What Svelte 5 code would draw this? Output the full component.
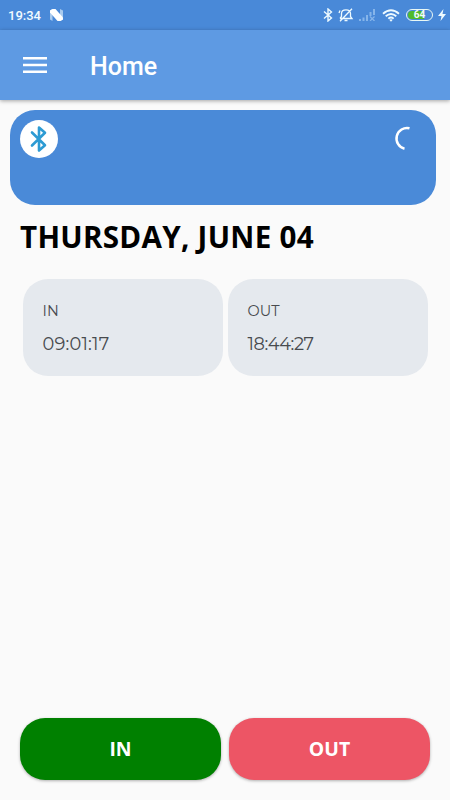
<script>
    let clock = '19:34';
    let battery = 64;
    let title = 'Home';
    let today = 'THURSDAY, JUNE 04';
    let records = [
        { label: 'IN', time: '09:01:17' },
        { label: 'OUT', time: '18:44:27' }
    ];

    function checkIn() {
        records[0].time = new Date().toTimeString().slice(0, 8);
    }

    function checkOut() {
        records[1].time = new Date().toTimeString().slice(0, 8);
    }
</script>

<style>
    :global(body) {
        margin: 0;
        background: #fafafa;
    }

    .screen {
        display: flex;
        flex-direction: column;
        height: 800px;
        box-sizing: border-box;
        background: #fafafa;
        font-family: Roboto, sans-serif;
    }

    svg {
        display: block;
        flex: none;
    }

    .status-bar {
        display: flex;
        align-items: center;
        height: 30px;
        padding: 0 4px 0 8px;
        background: #4989d8;
        color: #f2fbff;
    }

    .clock {
        width: 41px;
        padding-top: 1px;
        font-size: 13px;
        font-weight: 500;
        line-height: 29px;
    }

    .status-icons {
        display: flex;
        align-items: center;
        margin-left: auto;
    }

    .bell {
        margin-left: 5px;
    }

    .signal {
        margin-left: 4px;
    }

    .wifi {
        margin-left: 6px;
    }

    .bolt {
        margin-left: 5px;
    }

    .battery {
        display: flex;
        align-items: center;
        justify-content: center;
        box-sizing: border-box;
        width: 27px;
        height: 12px;
        margin-left: 6px;
        border: 1px solid #e9f8f5;
        border-radius: 6px;
        background: linear-gradient(90deg, #50ba2c 68%, #4989d8 68%) content-box;
        padding: 1px;
        font-size: 10px;
        font-weight: 700;
        line-height: 10px;
    }

    .toolbar {
        display: flex;
        align-items: center;
        height: 70px;
        padding-left: 23px;
        background: #5e9ae3;
        box-shadow: 0 1px 4px rgba(0, 0, 0, 0.35);
    }

    .menu {
        padding: 0;
        border: none;
        background: none;
        margin-top: -1px;
    }

    h1 {
        margin: 4px 0 0 43px;
        color: #fff;
        font-size: 25px;
        font-weight: 500;
        line-height: 32px;
    }

    .device {
        display: flex;
        justify-content: space-between;
        align-items: flex-start;
        box-sizing: border-box;
        height: 95.4px;
        margin: 10px 14px 0 10px;
        padding: 10px;
        border-radius: 25px;
        background: #4a8ad8;
    }

    .badge {
        display: flex;
        align-items: center;
        justify-content: center;
        width: 38px;
        height: 38px;
        border-radius: 50%;
        background: #fff;
    }

    h2 {
        margin: 10.6px 0 0 20px;
        color: #000;
        font-family: "Open Sans", sans-serif;
        font-size: 29.6px;
        font-weight: 700;
        line-height: 42px;
        letter-spacing: 0.27px;
        white-space: nowrap;
    }

    .records {
        display: grid;
        grid-template-columns: 1fr 1fr;
        gap: 5px;
        margin: 21px 22.5px 0;
    }

    .record {
        box-sizing: border-box;
        height: 97px;
        padding: 21px 20px 0;
        border-radius: 25px;
        background: #e5e9ee;
        color: #484b4e;
        font-family: Montserrat, Lato, sans-serif;
        font-kerning: none;
    }

    .label {
        font-size: 14.5px;
        line-height: 22px;
    }

    .time {
        margin-top: 11px;
        font-size: 17.8px;
        line-height: 22px;
        letter-spacing: 0.2px;
    }

    .record:last-child .time {
        letter-spacing: -0.4px;
    }

    .actions {
        display: grid;
        grid-template-columns: 1fr 1fr;
        gap: 8px;
        margin: auto 20px 20px;
    }

    .actions button {
        height: 62.5px;
        padding: 0 0 1px;
        border: none;
        border-radius: 25px;
        color: #fff;
        font-family: "Open Sans", sans-serif;
        font-size: 19.4px;
        font-weight: 700;
        box-shadow: 0 1px 3px rgba(0, 0, 0, 0.3);
        cursor: pointer;
    }

    .in {
        background: #008000;
    }

    .out {
        background: #ed5565;
    }
</style>

<div class="screen">
    <div class="status-bar">
        <span class="clock">{clock}</span>
        <svg width="15" height="12" viewBox="0 0 15 12">
            <path d="M1 1.5 3.5 0V12L1 10.5ZM11 0 14 1.5V10.5L11 12Z" fill="#a9cbef" />
            <path d="M1 1.5 3.5 0H6.5L14 8.5V10.5L11.5 12H8.5L1 3.5Z" fill="#fff" />
        </svg>
        <div class="status-icons">
            <svg width="10" height="14" viewBox="0 0 10 14" fill="none" stroke="#edfaff" stroke-width="1.4">
                <path d="M1 3.5 8.5 10 5 13V1L8.5 4 1 10.5" />
            </svg>
            <svg class="bell" width="16" height="14" viewBox="0 0 16 14" fill="none" stroke="#edfaff" stroke-width="1.3">
                <path d="M2 10.5H14L12.5 8.5V5.5C12.5 3 11 1.8 8 1.8S3.5 3 3.5 5.5V8.5L2 10.5M6.5 12.5H9.5M14 .7 2 13.3M1 5 2 2.5" />
            </svg>
            <svg class="signal" width="18" height="12" viewBox="0 0 18 12" stroke="#86b5ea" stroke-width="2">
                <path d="M2 12V10M5.5 12V8.5M9 12V6M12.5 7V3M16 6V0" />
                <path d="M12 7.5 16.5 12M16.5 7.5 12 12" stroke-width="1.2" />
            </svg>
            <svg class="wifi" width="18" height="13" viewBox="0 0 18 13" fill="none" stroke="#edfaff" stroke-width="1.8">
                <path d="M1 4.8Q9-2.2 17 4.8M3.7 7.3Q9 2.8 14.3 7.3M6.3 9.6Q9 7.5 11.7 9.6" />
                <path d="M7.2 10.7Q9 9.6 10.8 10.7L9 12.8Z" fill="#edfaff" stroke="none" />
            </svg>
            <div class="battery">{battery}</div>
            <svg class="bolt" width="8" height="12" viewBox="0 0 8 12">
                <path d="M5.5 0 0 7H3.5L2.5 12 8 5H4.5Z" fill="#edfaff" />
            </svg>
        </div>
    </div>

    <header class="toolbar">
        <button class="menu" aria-label="Menu">
            <svg width="24" height="18" viewBox="0 0 24 18" stroke="#fff" stroke-width="2.4">
                <path d="M0 2.2H24M0 9H24M0 15.8H24" />
            </svg>
        </button>
        <h1>{title}</h1>
    </header>

    <section class="device">
        <div class="badge">
            <svg width="18" height="28" viewBox="0 0 18 28" fill="none" stroke="#2d9bd3" stroke-width="2.6" stroke-linecap="round" stroke-linejoin="round">
                <path d="M2 7.5 15 20.2 9 25.5V2.5L15 7.8 2 20.5" />
            </svg>
        </div>
        <svg width="32" height="38" viewBox="0 0 32 38" fill="none" stroke="#fff" stroke-width="2.5">
            <path d="M15.5 8.3A10.3 10.3 0 0 0 10.5 28.7" />
        </svg>
    </section>

    <h2>{today}</h2>

    <div class="records">
        {#each records as record}
            <div class="record">
                <div class="label">{record.label}</div>
                <div class="time">{record.time}</div>
            </div>
        {/each}
    </div>

    <div class="actions">
        <button class="in" on:click={checkIn}>IN</button>
        <button class="out" on:click={checkOut}>OUT</button>
    </div>
</div>
